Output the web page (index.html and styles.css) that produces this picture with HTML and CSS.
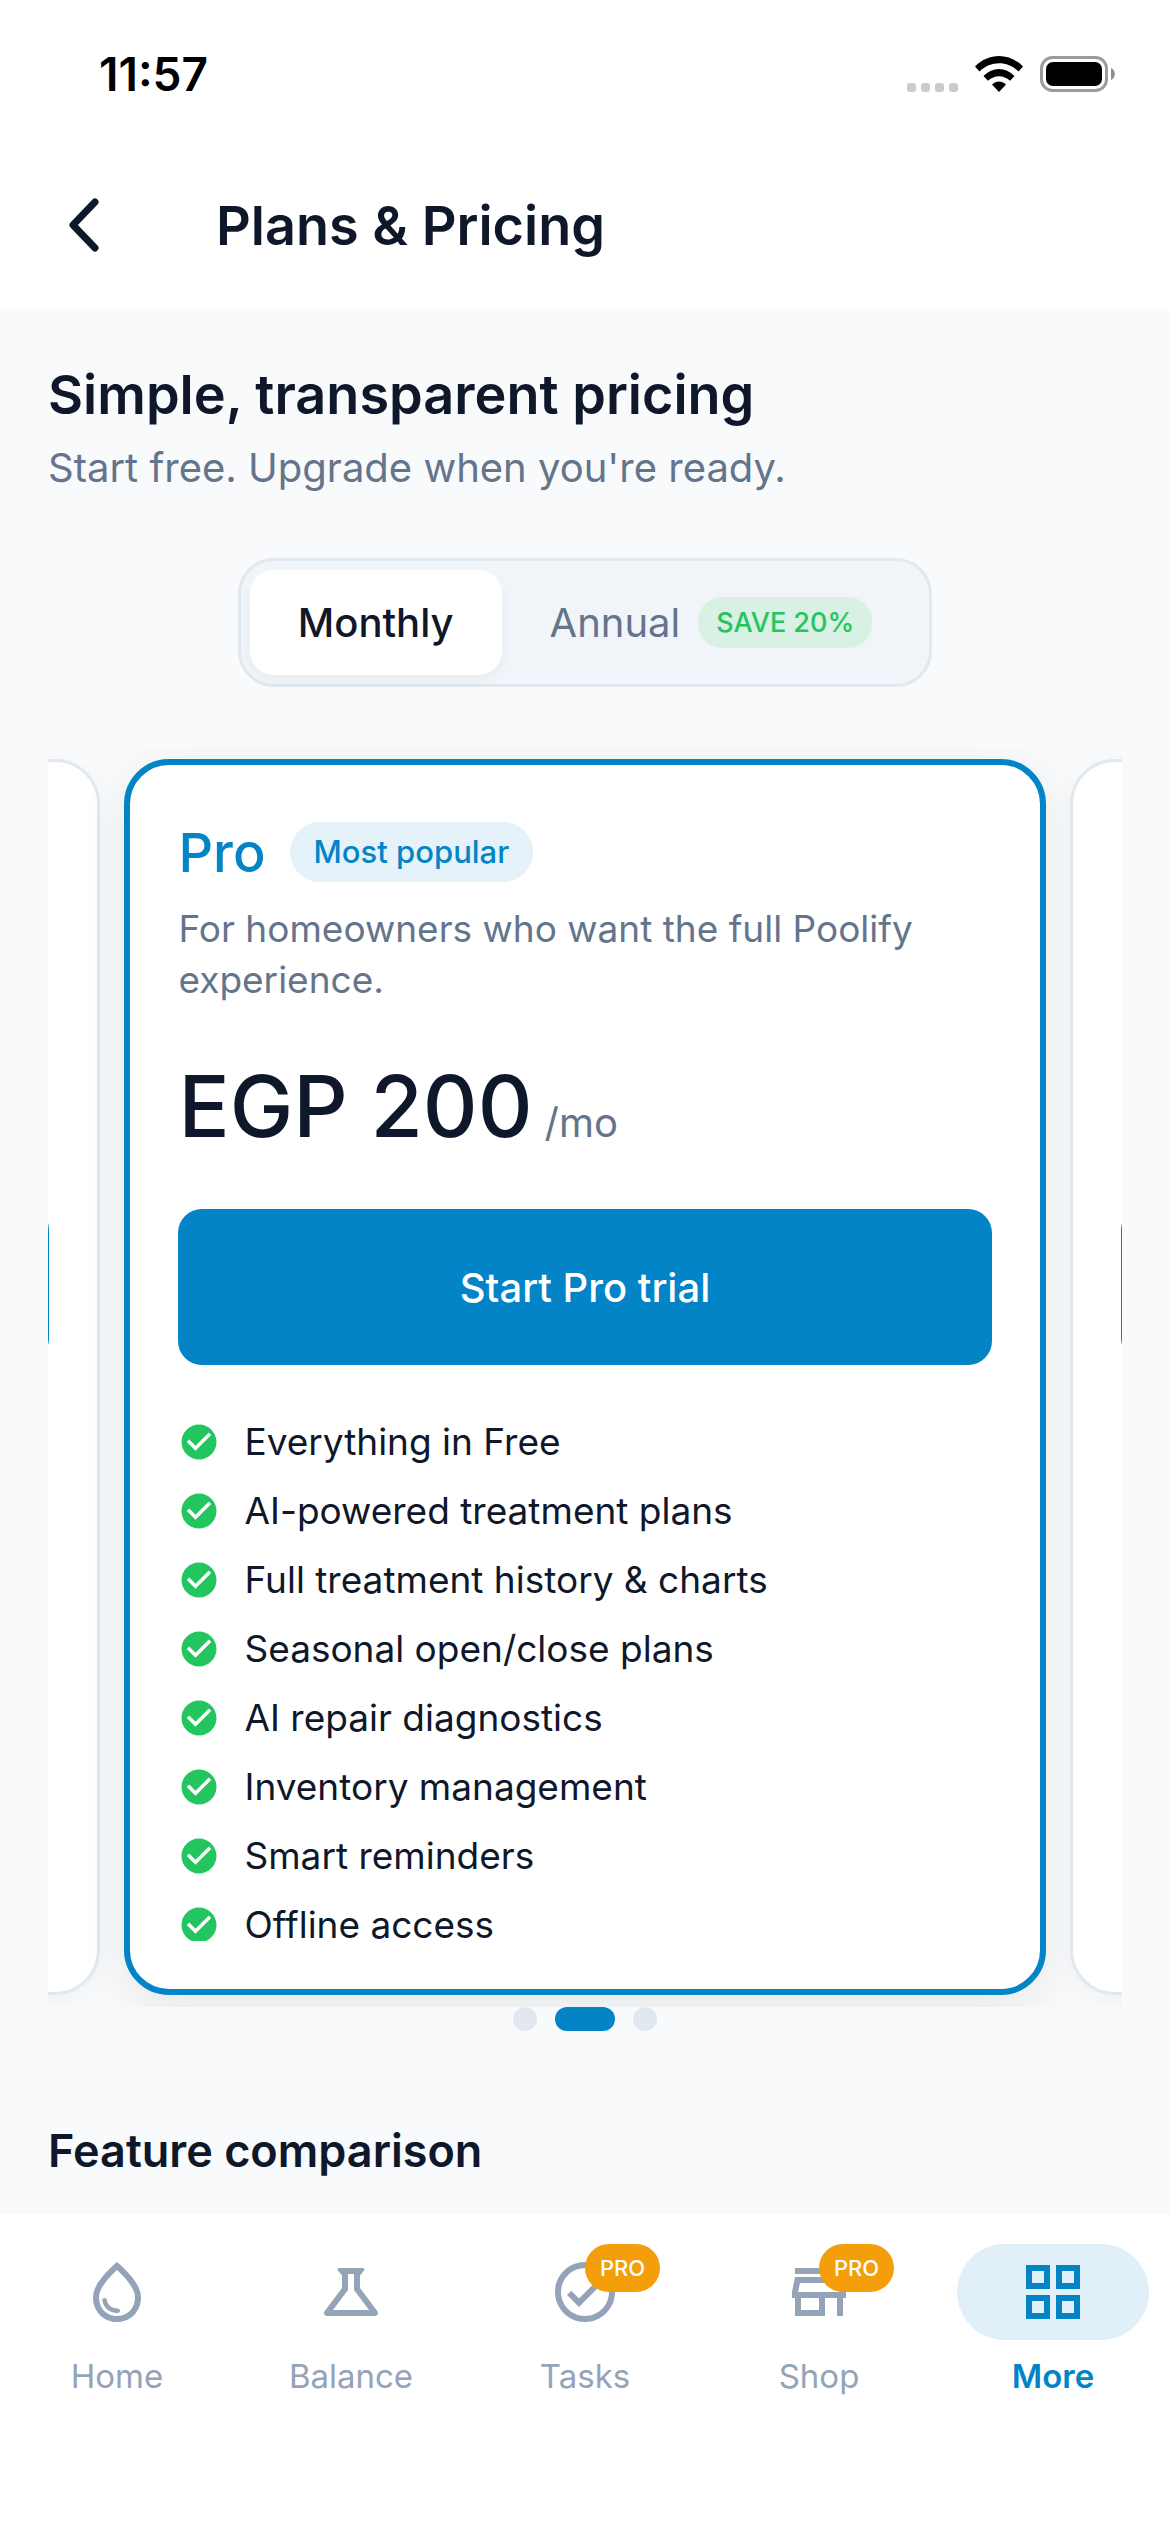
FILE: index.html
```html
<!DOCTYPE html>
<html lang="en">

<head>
  <meta charset="UTF-8" />
  <title>Plans &amp; Pricing</title>
  <meta name="viewport" content="width=device-width, initial-scale=1.0" />
  <link rel="stylesheet" href="styles.css">
</head>

<body>

  <header>
    <div class="status-bar">
      <span class="clock">11:57</span>
      <div class="status-icons">
        <svg class="signal" viewBox="0 0 51 9" fill="#cbcbcb">
          <rect width="9" height="9" rx="3" />
          <rect x="14" width="9" height="9" rx="3" />
          <rect x="28" width="9" height="9" rx="3" />
          <rect x="42" width="9" height="9" rx="3" />
        </svg>
        <svg class="wifi" viewBox="0 0 48 36">
          <path d="M0 10.5C13.500-3.500 34.500-3.500 48 10.500L43.500 15.500C32.500 4.500 15.500 4.500 4.500 15.500Z" />
          <path d="M8.500 20C17.500 10.800 30.500 10.800 39.500 20L35 24.800C28.500 18.600 19.500 18.600 13 24.800Z" />
          <path d="M17 28.500C21 24.600 27 24.600 31 28.500L24 36Z" />
        </svg>
        <svg class="battery" viewBox="0 0 76 36">
          <rect x="1.500" y="1.500" width="65" height="33" rx="11" fill="none" stroke="#9b9b9b" stroke-width="3" />
          <rect x="6" y="6" width="56" height="24" rx="7" />
          <path d="M71 12C76 14 76 22 71 24Z" fill="#8c8c8c" />
        </svg>
      </div>
    </div>
    <div class="app-bar">
      <button class="back" aria-label="Back">
        <svg viewBox="0 0 36 60">
          <path d="M29 7L7 30L29 53" />
        </svg>
      </button>
      <h1>Plans &amp; Pricing</h1>
    </div>
  </header>

  <main>
    <h2>Simple, transparent pricing</h2>
    <p class="subtitle">Start free. Upgrade when you're ready.</p>

    <div class="billing">
      <button class="active" aria-pressed="true">Monthly</button>
      <button aria-pressed="false">Annual <span class="save">SAVE 20%</span></button>
    </div>

    <div class="carousel">
      <section class="plan plan-side">
        <button class="plan-button" aria-label="Previous plan"></button>
      </section>

      <section class="plan plan-current">
        <div class="plan-head">
          <h3>Pro</h3>
          <span class="popular">Most popular</span>
        </div>
        <p class="plan-text">For homeowners who want the full Poolify experience.</p>
        <div class="price"><strong>EGP 200</strong><span>/mo</span></div>
        <button class="plan-button">Start Pro trial</button>
        <ul class="features">
          <li><svg viewBox="0 0 24 24"><use href="#check" /></svg>Everything in Free</li>
          <li><svg viewBox="0 0 24 24"><use href="#check" /></svg>AI-powered treatment plans</li>
          <li><svg viewBox="0 0 24 24"><use href="#check" /></svg>Full treatment history &amp; charts</li>
          <li><svg viewBox="0 0 24 24"><use href="#check" /></svg>Seasonal open/close plans</li>
          <li><svg viewBox="0 0 24 24"><use href="#check" /></svg>AI repair diagnostics</li>
          <li><svg viewBox="0 0 24 24"><use href="#check" /></svg>Inventory management</li>
          <li><svg viewBox="0 0 24 24"><use href="#check" /></svg>Smart reminders</li>
          <li><svg viewBox="0 0 24 24"><use href="#check" /></svg>Offline access</li>
        </ul>
      </section>

      <section class="plan plan-side">
        <button class="plan-button" aria-label="Next plan"></button>
      </section>
    </div>

    <div class="dots">
      <span></span>
      <span class="active"></span>
      <span></span>
    </div>

    <h2 class="comparison">Feature comparison</h2>
  </main>

  <nav>
    <a href="#home">
      <span class="nav-icon">
        <svg viewBox="0 0 24 24">
          <path d="M12 2C6.670 6.550 4 10.480 4 13.800 4 18.780 7.800 22 12 22s8-3.220 8-8.200C20 10.480 17.330 6.550 12 2zm0 18c-3.350 0-6-2.570-6-6.200 0-2.340 1.950-5.440 6-9.140 4.050 3.700 6 6.790 6 9.140 0 3.630-2.650 6.200-6 6.200zm-4.170-6c.37 0 .67.26.74.62.41 2.220 2.280 2.980 3.640 2.870.43-.02.79.32.79.75 0 .4-.32.73-.72.75-2.130.13-4.620-1.090-5.190-4.120-.08-.45.28-.87.74-.87z" />
        </svg>
      </span>
      Home
    </a>
    <a href="#balance">
      <span class="nav-icon">
        <svg viewBox="0 0 24 24">
          <path d="M13 11.330L18 18H6l5-6.670V6h2m2.960-2H8.040c-.42 0-.65.480-.39.810L9 6.500v4.170L3.200 18.400c-.49.660-.02 1.600.8 1.600h16c.82 0 1.290-.94.800-1.600L15 10.670V6.500l1.350-1.690c.26-.33.030-.81-.39-.81z" />
        </svg>
      </span>
      Balance
    </a>
    <a href="#tasks">
      <span class="nav-icon">
        <svg viewBox="0 0 24 24">
          <path d="M12 2C6.480 2 2 6.480 2 12s4.480 10 10 10 10-4.480 10-10S17.520 2 12 2zm0 18c-4.410 0-8-3.590-8-8s3.590-8 8-8 8 3.590 8 8-3.590 8-8 8zm4.590-12.420L10 14.170l-2.590-2.580L6 13l4 4 8-8z" />
        </svg>
        <span class="pro">PRO</span>
      </span>
      Tasks
    </a>
    <a href="#shop">
      <span class="nav-icon">
        <svg viewBox="0 0 24 24">
          <path d="M18.360 9l.6 3H5.040l.6-3h12.720M20 4H4v2h16V4zm0 3H4l-1 5v2h1v6h10v-6h4v6h2v-6h1v-2l-1-5zM6 18v-4h6v4H6z" />
        </svg>
        <span class="pro">PRO</span>
      </span>
      Shop
    </a>
    <a href="#more" class="active">
      <span class="nav-icon">
        <svg viewBox="0 0 24 24">
          <path d="M3 3v8h8V3H3zm6 6H5V5h4v4zm-6 4v8h8v-8H3zm6 6H5v-4h4v4zm4-16v8h8V3h-8zm6 6h-4V5h4v4zm-6 4v8h8v-8h-8zm6 6h-4v-4h4v4z" />
        </svg>
      </span>
      More
    </a>
  </nav>

  <!-- shared icons -->
  <svg width="0" height="0" class="sprite">
    <symbol id="check" viewBox="0 0 24 24">
      <path d="M12 2C6.480 2 2 6.480 2 12s4.480 10 10 10 10-4.480 10-10S17.520 2 12 2zm-2 15l-5-5 1.410-1.410L10 14.170l7.590-7.590L19 8l-9 9z" />
    </symbol>
  </svg>

</body>

</html>
```

FILE: styles.css
```css
/* ─── RESET & BASE LAYOUT ─────────────────────────────────────────── */
* {
  box-sizing: border-box;
  margin: 0;
  padding: 0;
}

body {
  display: flex;
  flex-direction: column;
  height: 100vh;
  background: #f8fafc;
  color: #0f172a;
  font-family: Inter, "Liberation Sans", sans-serif;
  overflow: hidden;
}

button {
  border: none;
  background: none;
  color: inherit;
  font-family: inherit;
  cursor: pointer;
}

.sprite {
  position: absolute;
}

/* ─── HEADER ─────────────────────────────────────────────────────── */
header {
  flex: none;
  background: #fff;
}

.status-bar {
  display: flex;
  align-items: center;
  justify-content: space-between;
  height: 141px;
  padding: 6px 54px 0 99px;
  color: #000;
}

.clock {
  font-size: 46px;
  font-weight: 600;
}

.status-icons {
  display: flex;
  align-items: flex-end;
  gap: 17px;
}

.signal {
  width: 51px;
  height: 9px;
}

.wifi {
  width: 48px;
  height: 36px;
}

.battery {
  width: 76px;
  height: 36px;
}

.app-bar {
  display: flex;
  align-items: center;
  gap: 114px;
  height: 168px;
  padding: 0 66px;
}

.back {
  display: flex;
}

.back svg {
  width: 36px;
  height: 60px;
  fill: none;
  stroke: #0f172a;
  stroke-width: 7;
  stroke-linecap: round;
  stroke-linejoin: round;
}

h1 {
  font-size: 54px;
  font-weight: 600;
}

/* ─── CONTENT ────────────────────────────────────────────────────── */
main {
  flex: 1;
  min-height: 0;
  padding: 48px;
  overflow: hidden;
}

h2 {
  font-size: 54px;
  font-weight: 600;
  line-height: 75px;
}

.subtitle {
  margin-top: 6px;
  color: #64748b;
  font-size: 40px;
  line-height: 60px;
}

.comparison {
  margin-top: 90px;
  font-size: 45px;
  line-height: 60px;
}

/* ─── BILLING TOGGLE ─────────────────────────────────────────────── */
.billing {
  display: flex;
  width: fit-content;
  margin: 60px auto;
  padding: 9px;
  background: #f1f5f9;
  border: 3px solid #e2e8f0;
  border-radius: 36px;
}

.billing button {
  display: flex;
  align-items: center;
  gap: 18px;
  height: 105px;
  padding: 0 48px;
  border-radius: 24px;
  color: #64748b;
  font-size: 40px;
}

.billing .active {
  background: #fff;
  box-shadow: 0 6px 12px rgba(0, 0, 0, 0.04);
  color: #0f172a;
  font-weight: 500;
}

.save {
  padding: 0 18px;
  background: #d9f0e4;
  border-radius: 24px;
  color: #22c55e;
  font-size: 27px;
  font-weight: 500;
  line-height: 51px;
}

/* ─── PLAN CAROUSEL ──────────────────────────────────────────────── */
.carousel {
  display: flex;
  justify-content: center;
  gap: 24px;
  height: 1260px;
  padding: 12px 0;
  overflow: hidden;
}

.plan {
  display: flex;
  flex-direction: column;
  flex: 0 0 calc(88% - 24px);
  padding: 48px;
  background: #fff;
  border: 3px solid #e2e8f0;
  border-radius: 45px;
  box-shadow: 0 6px 24px rgba(0, 0, 0, 0.04);
}

.plan-side {
  padding-top: 444px;
}

.plan-current {
  border: 6px solid #0284c7;
  box-shadow: 0 12px 48px rgba(0, 0, 0, 0.08);
}

.plan-head {
  display: flex;
  align-items: center;
  gap: 24px;
  height: 78px;
  margin-bottom: 12px;
}

h3 {
  color: #0284c7;
  font-size: 54px;
  font-weight: 500;
}

.popular {
  padding: 0 24px;
  background: #e5f2f9;
  border-radius: 30px;
  color: #0284c7;
  font-size: 31px;
  font-weight: 500;
  line-height: 60px;
}

.plan-text {
  color: #64748b;
  font-size: 37px;
  line-height: 51px;
}

.price {
  display: flex;
  align-items: baseline;
  gap: 12px;
  margin: 48px 0;
}

.price strong {
  font-size: 85px;
  font-weight: 500;
  line-height: 108px;
}

.price span {
  color: #64748b;
  font-size: 40px;
}

.plan-button {
  flex: none;
  height: 156px;
  background: #0284c7;
  border-radius: 24px;
  color: #fff;
  font-size: 40px;
  font-weight: 500;
}

.plan-side .plan-button {
  background: #fff;
  border: 3px solid #0284c7;
}

.features {
  display: flex;
  flex: 1;
  flex-direction: column;
  gap: 12px;
  min-height: 0;
  margin-top: 48px;
  overflow: hidden;
  list-style: none;
}

.features li {
  display: flex;
  flex: none;
  align-items: center;
  gap: 24px;
  font-size: 37px;
  line-height: 57px;
}

.features svg {
  width: 42px;
  height: 42px;
  fill: #22c55e;
}

/* ─── PAGE DOTS ──────────────────────────────────────────────────── */
.dots {
  display: flex;
  justify-content: center;
  gap: 18px;
}

.dots span {
  width: 24px;
  height: 24px;
  background: #e2e8f0;
  border-radius: 12px;
}

.dots .active {
  width: 60px;
  background: #0284c7;
}

/* ─── BOTTOM NAV ─────────────────────────────────────────────────── */
nav {
  display: flex;
  flex: none;
  height: 318px;
  padding-top: 30px;
  background: #fff;
}

nav a {
  display: flex;
  flex: 1;
  flex-direction: column;
  align-items: center;
  gap: 12px;
  color: #94a3b8;
  font-size: 33px;
  line-height: 48px;
  text-decoration: none;
}

.nav-icon {
  position: relative;
  display: flex;
  align-items: center;
  justify-content: center;
  width: 192px;
  height: 96px;
  border-radius: 48px;
}

.nav-icon svg {
  width: 72px;
  height: 72px;
  fill: currentColor;
}

nav .active {
  color: #0284c7;
  font-weight: 600;
}

nav .active .nav-icon {
  background: #e0eff8;
}

.pro {
  position: absolute;
  top: 0;
  left: 96px;
  padding: 0 15px;
  background: #f59e0b;
  border-radius: 24px;
  color: #fff;
  font-size: 22px;
  font-weight: 500;
}
```
